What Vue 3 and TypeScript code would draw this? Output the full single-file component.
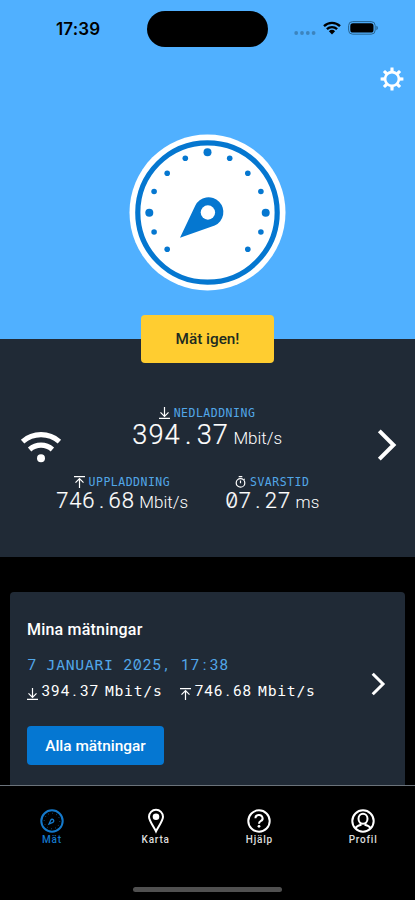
<script setup lang="ts">
import { h } from 'vue'

interface Dot { x: number; y: number; r: number }

const small: [number, number][] = [[22.2, -54.3], [40.3, -39.3], [53.4, -21], [53.4, 19.5], [40.3, 36.8]]
const dots: Dot[] = [
  { x: 0, y: -60.3, r: 4 },
  { x: -58.2, y: 0.3, r: 4 },
  { x: 58.2, y: 0.3, r: 4 },
  ...small.flatMap(([x, y]) => [{ x, y, r: 2.8 }, { x: -x, y, r: 2.8 }]),
]

const tabs = [
  { id: 'measure', label: 'Mät' },
  { id: 'map', label: 'Karta' },
  { id: 'help', label: 'Hjälp' },
  { id: 'profile', label: 'Profil' },
]

const kind = (c: string) => (c === '0' ? 'zero' : /[1-9.,:]/.test(c) ? 'digit' : 'letter')

// Sets every character in a cell of equal width
const Mono = (props: { text: string }) =>
  h('span', { class: 'mono' }, [...props.text].map((c) => h('span', { class: ['ch', kind(c)] }, c)))
Mono.props = ['text']
</script>

<template>
  <main class="phone">
    <section class="hero">
      <header class="status">
        <span class="time">17:39</span>
        <span class="island"></span>
        <span class="signals">
          <svg class="cell" width="22" height="4" viewBox="0 0 22 4"><circle v-for="n in 4" :key="n" :cx="n * 5.8 - 3.6" cy="2" r="1.9" /></svg>
          <svg class="net" width="18" height="14" viewBox="0 0 18 14">
            <path d="M1 5.1a11.6 11.6 0 0 1 16 0M3.9 8.1a7.5 7.5 0 0 1 10.2 0" fill="none" stroke="#000" stroke-width="2.4" />
            <path d="M5.9 10.2a4.5 4.5 0 0 1 6.2 0L9 13.4z" />
          </svg>
          <svg width="30" height="14" viewBox="0 0 30 14">
            <rect x=".6" y=".6" width="26.6" height="12.6" rx="4" fill="none" stroke="#276492" stroke-width="1" />
            <rect x="2.3" y="2.3" width="23.2" height="9.2" rx="2.6" />
            <path d="M28.4 4.8q1.5.6 1.5 2.2t-1.5 2.2z" fill="#276492" />
          </svg>
        </span>
      </header>
      <div class="toolbar">
        <svg width="24" height="24" viewBox="-12 -12 24 24">
          <circle r="6.9" fill="none" stroke="#fff" stroke-width="2.6" />
          <path v-for="n in 8" :key="n" d="M-1.7-7.4L-1.5-11.4H1.5L1.7-7.4z" fill="#fff" :transform="`rotate(${n * 45})`" />
        </svg>
      </div>
      <svg class="dial" width="156" height="156" viewBox="-77.5 -77.5 156 156">
        <circle r="78" fill="#fff" />
        <circle r="69.7" fill="none" stroke="#0577d0" stroke-width="5.2" />
        <circle v-for="(d, i) in dots" :key="i" :cx="d.x" :cy="d.y" :r="d.r" fill="#0577d0" />
        <path d="M-27.5 25.2L-12.3-6.8A14.8 14.8 0 1 1 7.2 13z" fill="#0577d0" />
        <circle cx=".4" cy="0" r="7.2" fill="#fff" />
      </svg>
      <button class="again">Mät igen!</button>
    </section>

    <section class="result">
      <svg class="wifi" width="42" height="32" viewBox="0 0 42 32">
        <g fill="none" stroke="#fff" stroke-width="5.2"><path d="M2.6 10.6a28 28 0 0 1 36.8 0M9.6 18.4a17.6 17.6 0 0 1 22.8 0" /></g>
        <circle cx="21" cy="27.3" r="4" fill="#fff" />
      </svg>
      <div class="figures">
        <div class="figure main">
          <div class="caption"><svg width="11" height="12" viewBox="0 0 11 12"><path d="M5.5 0v9M1.5 5.3l4 4 4-4M0 11.4h11" /></svg><span>NEDLADDNING</span></div>
          <div class="value"><Mono text="394.37" /><i>Mbit/s</i></div>
        </div>
        <div class="pair">
          <div class="figure up">
            <div class="caption"><svg width="11" height="12" viewBox="0 0 11 12"><path d="M5.5 12V3M1.5 6.7l4-4 4 4M0 .6h11" /></svg><span>UPPLADDNING</span></div>
            <div class="value"><Mono text="746.68" /><i>Mbit/s</i></div>
          </div>
          <div class="figure">
            <div class="caption"><svg width="11" height="12" viewBox="0 0 11 12"><path d="M3.7.6h3.6M5.5 4.5v2.7M8.8 2.8l.9.9" /><circle cx="5.5" cy="6.9" r="4.3" /></svg><span>SVARSTID</span></div>
            <div class="value"><Mono text="07.27" /><i>ms</i></div>
          </div>
        </div>
      </div>
      <svg class="next" width="20" height="32" viewBox="0 0 20 32"><path d="M2.3 1.8L16.5 16 2.3 30.2" fill="none" stroke="#fff" stroke-width="4" /></svg>
    </section>

    <section class="history">
      <article class="card">
        <div class="entry">
          <h2>Mina mätningar</h2>
          <p class="date"><Mono text="7 JANUARI 2025, 17:38" /></p>
          <p class="speeds">
            <svg width="11" height="12" viewBox="0 0 11 12"><path d="M5.5 0v9M1.5 5.3l4 4 4-4M0 11.4h11" /></svg><Mono text="394.37" /><Mono class="unit" text="Mbit/s" />
            <svg class="second" width="11" height="12" viewBox="0 0 11 12"><path d="M5.5 12V3M1.5 6.7l4-4 4 4M0 .6h11" /></svg><Mono text="746.68" /><Mono class="unit" text="Mbit/s" />
          </p>
          <button class="all">Alla mätningar</button>
        </div>
        <svg class="open" width="14" height="24" viewBox="0 0 14 24"><path d="M1.7 1.7L12 12 1.7 22.3" fill="none" stroke="#fff" stroke-width="3" /></svg>
      </article>
    </section>

    <nav class="tabs">
      <div class="row">
        <a v-for="t in tabs" :key="t.id" class="tab" :class="{ active: t.id === 'measure' }">
          <svg width="24" height="24" viewBox="-12 -12 24 24" fill="none" stroke="currentColor" stroke-width="2">
            <template v-if="t.id === 'measure'">
              <circle r="10.7" />
              <circle r="7.8" stroke-width=".8" stroke-dasharray=".8 3.28" />
              <path d="M-3 3L-1.3-.8A1.6 1.6 0 1 1 .8 1.3z" stroke-width="1.3" />
            </template>
            <template v-else-if="t.id === 'map'">
              <path d="M0 10.4C-2.2 5.8-7-.3-7-4.2a7 7 0 0 1 14 0C7-.3 2.2 5.8 0 10.4z" />
              <circle cy="-4.2" r="3.3" fill="currentColor" stroke="none" />
            </template>
            <template v-else-if="t.id === 'help'">
              <circle r="10.7" />
              <path d="M-3.6-2.7A3.6 3.2 0 1 1 1.6.1Q0 .9 0 2.8" />
              <circle cy="5.3" r="1.4" fill="currentColor" stroke="none" />
            </template>
            <template v-else>
              <circle r="10.7" />
              <ellipse cy="-2.2" rx="4.5" ry="5" />
              <path d="M-7.6 7.4Q-6.3 4.7-2.4 4V2M7.6 7.4Q6.3 4.7 2.4 4V2" />
            </template>
          </svg>
          <span>{{ t.label }}</span>
        </a>
      </div>
      <div class="home"></div>
    </nav>
  </main>
</template>

<style>
body { margin: 0; background: #000; }
.mono { display: inline-flex; white-space: pre; }
.mono .ch { display: flex; justify-content: center; flex: none; width: var(--cell); }
.mono .digit { font-family: Roboto, sans-serif; }
.mono .zero { font-family: Inter, sans-serif; font-feature-settings: "zero"; font-size: .95em; }
.mono .letter { font-family: "DejaVu Sans Mono", monospace; font-size: .97em; }
</style>

<style scoped>
* { box-sizing: border-box; }
.phone { width: 415px; height: 900px; display: flex; flex-direction: column; background: #000; color: #fff; overflow: hidden; font-family: Roboto, "Liberation Sans", sans-serif; }
.hero { height: 338.5px; flex: none; background: #50b0ff; display: flex; flex-direction: column; align-items: center; }
.status { width: 100%; height: 58px; flex: none; display: grid; grid-template-columns: 147px 121px 147px; align-items: center; color: #000; }
.time { padding-left: 56px; font: 600 17px/20px Inter, sans-serif; letter-spacing: .15px; }
.island { height: 36px; border-radius: 18px; background: #000; }
.signals { display: flex; align-items: center; padding-left: 26px; height: 16px; margin-top: -2px; }
.cell { fill: #3c84be; margin-top: 10px; }
.net { margin: 0 7px; }
.toolbar { width: 100%; height: 76.5px; flex: none; padding: 8.5px 11.5px 0; display: flex; justify-content: flex-end; align-items: flex-start; }
.dial { flex: none; }
button { border: 0; border-radius: 4px; font-family: Roboto, sans-serif; font-weight: 500; padding: 0; }
.again { position: relative; z-index: 1; flex: none; width: 133px; height: 48px; margin-top: 24.5px; background: #ffcd30; color: #202b20; font-size: 15.3px; line-height: 48px; }
.result { height: 218.5px; flex: none; background: #202a36; display: flex; align-items: flex-start; padding: 67px 18.5px 0 20px; }
.wifi { flex: none; margin-top: 25px; }
.figures { flex: 1; display: flex; flex-direction: column; align-items: center; margin: 0 13.5px 0 -11px; }
svg { display: block; overflow: visible; }
.caption { height: 14px; display: flex; align-items: center; justify-content: center; gap: 4px; color: #52a7e8; font: 11.5px/14px "DejaVu Sans Mono", monospace; letter-spacing: .5px; }
.caption svg, .speeds svg { flex: none; fill: none; stroke: #fff; stroke-width: 1.2; }
.value { display: flex; align-items: baseline; justify-content: center; height: 28px; --cell: 13.1px; }
.value .mono { font-size: 22px; line-height: 28px; font-weight: 300; -webkit-text-stroke: .2px #fff; }
.value i { font: 300 17px/28px Roboto, sans-serif; margin-left: 5px; }
.main .value { height: 32px; margin-top: -1px; --cell: 16.1px; }
.main .value .mono { font-size: 27.2px; line-height: 32px; }
.pair { display: flex; gap: 37px; margin-top: 24px; margin-right: 39px; }
.pair .value { margin-top: -2px; }
.next { flex: none; margin-top: 23px; }
.history { flex: 1; min-height: 0; padding: 34.5px 10px 0; display: flex; }
.card { flex: 1; background: #202a36; border-radius: 4px 4px 0 0; display: flex; justify-content: space-between; padding: 27px 20px 0 17px; }
h2 { margin: 0; font-size: 16px; line-height: 22px; font-weight: 500; letter-spacing: .2px; }
p { margin: 0; --cell: 9.6px; font-size: 15.2px; line-height: 20px; }
.date { margin-top: 14.5px; color: #52a7e8; height: 20px; }
.speeds { display: flex; align-items: center; margin-top: 6px; height: 20px; }
.speeds svg { margin: 6px 3px 0 0; }
.speeds .second { margin-left: 18px; }
.unit { margin-left: 6px; }
.all { display: block; width: 137px; height: 39.5px; margin-top: 24.5px; background: #0577d2; color: #fff; font-size: 15.4px; line-height: 40px; }
.open { margin-top: 53.5px; }
.tabs { flex: none; height: 115px; background: #000; border-top: 1px solid #6b737b; display: flex; flex-direction: column; align-items: center; }
.row { width: 100%; display: grid; grid-template-columns: repeat(4, 1fr); padding-top: 23px; }
.tab { display: flex; flex-direction: column; align-items: center; }
.tab span { font: 500 10px/12px Roboto, sans-serif; letter-spacing: .8px; color: #ddd; margin-top: .5px; }
.tab.active, .tab.active span { color: #1479cb; }
.home { width: 149px; height: 5px; border-radius: 3px; background: #505050; margin-top: 41.5px; }
</style>
